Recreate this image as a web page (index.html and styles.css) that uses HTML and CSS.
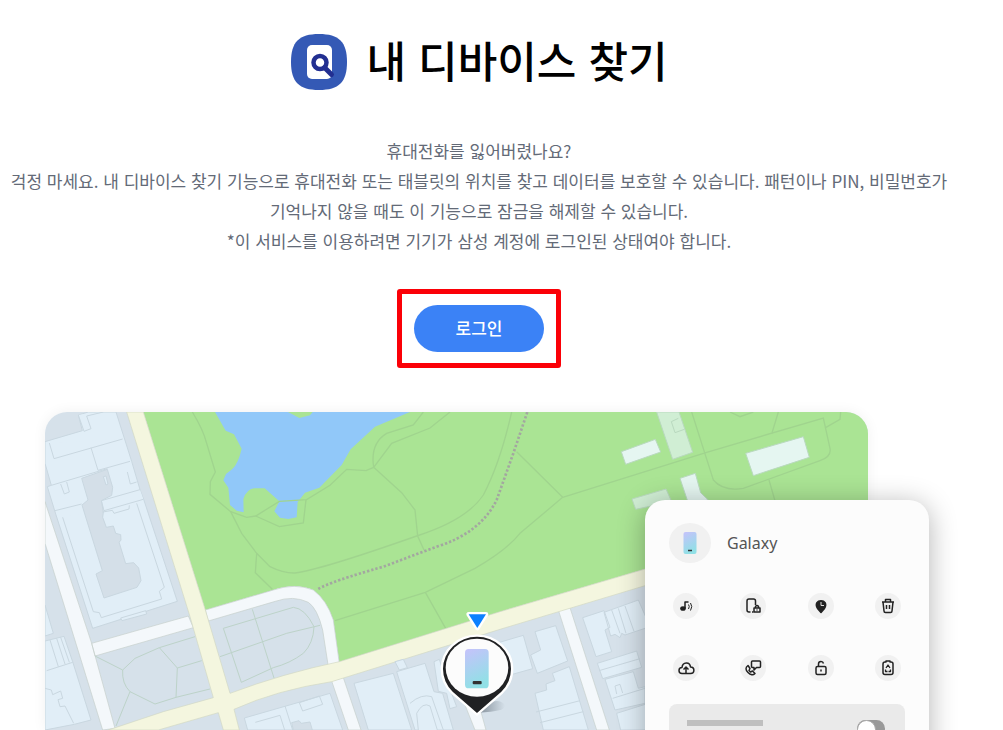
FILE: index.html
```html
<!DOCTYPE html>
<html lang="ko">
<head>
  <meta charset="UTF-8">
  <meta name="viewport" content="width=device-width, initial-scale=1.0">
  <title>내 디바이스 찾기</title>
  <link rel="stylesheet" href="styles.css">
</head>
<body>
  <main class="page">
    <header class="title">
      <svg class="logo" viewBox="0 0 56 56" aria-hidden="true">
        <path d="M28 0C48 0 56 8 56 28S48 56 28 56 0 48 0 28 8 0 28 0z" fill="#3459b5"/>
        <rect x="16" y="11" width="25" height="34" rx="5" fill="#fff"/>
        <circle cx="29" cy="28.500" r="6.500" fill="#fff" stroke="#222f91" stroke-width="4.500"/>
        <path d="M34 34l6.500 6.500" stroke="#222f91" stroke-width="5" stroke-linecap="round"/>
      </svg>
      <h1>내 디바이스 찾기</h1>
    </header>

    <p class="intro">
      휴대전화를 잃어버렸나요?<br>
      걱정 마세요. 내 디바이스 찾기 기능으로 휴대전화 또는 태블릿의 위치를 찾고 데이터를 보호할 수 있습니다. 패턴이나 PIN, 비밀번호가 기억나지 않을 때도 이 기능으로 잠금을 해제할 수 있습니다.<br>
      *이 서비스를 이용하려면 기기가 삼성 계정에 로그인된 상태여야 합니다.
    </p>

    <div class="login-frame">
      <button class="login" type="button">로그인</button>
    </div>

    <section class="stage">
      <svg class="map" viewBox="45 36 2469 954" preserveAspectRatio="xMinYMin slice" aria-hidden="true">
        <defs>
          <linearGradient id="screen" x1="0" y1="0" x2="0.300" y2="1">
            <stop offset="0" stop-color="#c6c2fb"/>
            <stop offset="1" stop-color="#91e0e6"/>
          </linearGradient>
          <linearGradient id="pin-shadow">
            <stop offset="0" stop-color="#6e7a85" stop-opacity="0.800"/>
            <stop offset="1" stop-color="#6e7a85" stop-opacity="0"/>
          </linearGradient>
        </defs>
        <rect x="45" y="36" width="2469" height="954" fill="#d6e1ea"/>

        <!-- park and lake -->
        <path d="M340 36L526 630 730 570Q795 548 850 570 890 600 910 660L928 785 1410 635 1845 507 2514 320V36z" fill="#aae494"/>
        <path d="M555 36L587 92 612 103 635 146Q625 190 607 207L588 222 580 241 595 263 600 315 620 332 641 337 640 297Q650 268 672 265H704L748 304 733 334 750 353 775 357 800 352 803 306 825 278 868 263 935 195 962 148 1035 80 1140 36z" fill="#91c8f9"/>
        <path d="M774 36L808 54 840 46 848 36z" fill="#aae494"/>

        <!-- park paths -->
        <g class="trail">
          <path d="M487 36Q520 90 530 130L556 216 541 245 540 283 602 335 650 352 677 348 748 304 830 299 900 256 950 208 1008 212 1031 202"/>
          <path d="M677 348L748 380 820 369 828 299M602 335L635 400 680 460 720 500Q760 520 795 519 870 510 1160 408 1310 360 1360 285 1410 190 1445 36"/>
          <path d="M680 460L676 518 727 568M1031 202Q1020 130 1070 100L1150 75 1180 36M1031 202L1085 130 1200 84 1260 36M1031 202L1115 278 1155 330 1163 408 1182 450"/>
          <path d="M915 662L1186 577 1335 505Q1430 450 1470 400L1598 292 1460 155M1186 577L1247 685M1598 292L2030 157 2380 54 2400 145Q2405 170 2370 182L2140 265Q2080 275 2050 240L1985 36M2225 102L2245 36M2388 82L2430 58 2432 36M2217 240L2240 320M2100 36L2130 50 2170 36"/>
        </g>
        <path d="M865 567Q900 545 1060 500L1220 440Q1350 400 1400 300L1450 160 1492 36" class="dotted"/>

        <!-- streets -->
        <g stroke="#c5ceca" stroke-width="2">
          <path d="M45 305L185 730 255 985 218 990 45 430zM185 730L475 648 490 683 195 768z" fill="#f4f8fb"/>
          <path d="M526 630L730 570Q795 548 850 570 890 600 910 660L928 790 895 800 878 690Q862 625 835 607 790 585 736 604L535 663z" fill="#f4f8fb"/>
          <path d="M905 843L940 833 993 990 955 990zM1305 915L1350 925 1368 990 1335 990zM1585 630L1620 623 1738 990 1700 990z" fill="#f4f8fb"/>
        </g>
        <path d="M290 36H340L526 630 600 880Q760 820 928 785L1410 635 1845 507 2000 462V510L1845 557 1410 688 905 845Q740 870 612 928L628 990H580L565 938 385 990H235L400 935 550 893 480 650z" fill="#f4f6df" stroke="#d2d8c2" stroke-width="2"/>

        <!-- buildings, north-west block -->
        <g class="building">
          <path d="M45 125L157 92 145 45 175 36H258L305 184 330 269 341 298 442 604 188 685 78 345 52 260 64 256 45 190z"/>
          <path d="M145 45L162 94 183 86 170 48 220 36M58 129L72 176 278 117M183 143L204 211 300 184M64 256L232 206M92 252L103 282 118 276 110 246M330 269L214 302 222 332 340 298M75 332L155 312M98 352L190 635 208 638 214 653 395 597 388 574 403 562 320 310M292 216L301 252 320 246M272 654L347 632 350 642 276 662z"/>
          <path d="M155 235L232 208 248 262 245 286 214 302 220 336 218 352 229 382 250 378 257 400 272 404 273 421 267 426 287 491 311 488 326 504 333 542 321 562 222 594 198 522 217 512 156 315 174 300z" class="yard"/>
          <path d="M218 336L247 331 252 340 297 327 298 316M220 230L228 255 234 252 228 228z"/>
          <path d="M45 615L70 700 45 708zM45 723L102 709 128 785 183 960 133 973 45 990zM50 812L128 787M60 720L85 800M80 715L105 792M92 712L118 787"/>
          <path d="M45 865L64 870 68 884 92 873 98 895 84 899 90 920 105 918 131 970"/>
        </g>

        <!-- squares -->
        <g class="lawn">
          <path d="M195 768L278 810 315 775 388 743 495 710M278 810Q275 850 300 875L375 912 438 892 540 867M388 743L442 804 438 892M442 804L515 782M300 875L258 978"/>
          <path d="M580 685L790 622Q825 625 852 680 850 730 820 760 780 790 730 803L634 847zM667 628L732 834M570 770L770 700 870 676"/>
        </g>

        <!-- buildings south of the avenue -->
        <g class="building">
          <path d="M643 954L900 880 938 990H653zM765 918L788 990M676 967L750 946 764 990M808 908L868 888 878 913 818 933z"/>
          <path d="M785 968L807 962 814 970 840 966 847 990H790z" class="yard"/>
          <path d="M972 850L1090 820 1145 990H1015zM1095 785L1120 778 1132 803 1108 810zM1100 815L1185 790 1212 875 1238 880 1270 990H1155L1100 815"/>
          <path d="M1140 910Q1175 880 1205 890L1240 990M1165 990L1160 940Q1178 905 1200 918L1222 990M1212 785L1228 778 1240 815 1280 920 1260 926 1250 880 1225 874z"/>
          <path d="M1405 728L1480 706 1508 806 1440 825zM1515 695L1577 677 1613 783 1522 820 1502 765 1532 750zM1567 820L1618 800 1675 990H1540L1515 880 1550 870 1548 852 1575 842zM1518 936L1650 902M1530 968L1660 935"/>
          <path d="M1658 653L1722 632 1740 682 1725 690 1745 755 1698 770zM1722 637L1825 600 1860 680 1785 705 1775 700 1770 713 1755 703 1742 708zM1745 630L1770 700M1765 625L1788 700M1785 618L1812 694M1702 790L1820 753 1835 802 1718 836zM1707 812L1830 776M1725 838L1810 815 1825 865 1845 860V910L1755 930zM1748 895L1845 865M1760 940L1855 910V990H1772zM1760 882L1755 858 1770 853 1778 879"/>
        </g>
        <g class="pavilion">
          <path d="M1774 155L1876 118 1892 156 1787 193zM2147 160L2320 110 2338 172 2170 227zM1950 235L1996 220 2012 278 2035 300 1975 310z" fill="#e5f6f1"/>
          <path d="M1880 36H1947L1988 157 1928 178zM1806 297L1908 267 1925 305 1817 328z" fill="#d0eed4"/>
          <path d="M1945 55L1924 65 1935 98 1963 88" fill="none"/>
        </g>

        <!-- device pin -->
        <path d="M1345 932Q1400 885 1425 915 1430 935 1345 938z" fill="url(#pin-shadow)"/>
        <path d="M1341 939L1268 875A102 97 0 1 1 1414 875z" fill="#202123" stroke="#fff" stroke-width="14" paint-order="stroke"/>
        <ellipse cx="1341" cy="803" rx="94" ry="87" fill="#fcfcfc"/>
        <rect x="1305" y="747" width="71" height="118" rx="11" fill="url(#screen)"/>
        <rect x="1328" y="843" width="27" height="10" rx="3" fill="#333"/>
        <path d="M1316 643H1368L1342 684z" fill="#0b80ff" stroke="#fff" stroke-width="14" stroke-linejoin="round" paint-order="stroke"/>
      </svg>

      <aside class="card">
        <div class="device">
          <svg class="device-icon" viewBox="0 0 42 40" aria-hidden="true">
            <ellipse cx="21" cy="20" rx="21" ry="20" fill="#f1f1f1"/>
            <rect x="14.500" y="9" width="13" height="22" rx="2" fill="url(#screen)"/>
            <path d="M19 27.500h4" stroke="#333" stroke-width="1.500"/>
          </svg>
          <span>Galaxy</span>
        </div>

        <div class="actions">
          <button type="button" aria-label="소리 울리기">
            <svg viewBox="0 0 26 26"><ellipse cx="10" cy="15.500" rx="2.800" ry="2.300" fill="#222" stroke="none"/><path d="M12 15.500V9h3.500"/><path d="M15.500 11.500q1.500 2 0 4.500M17.500 10q2.500 3.500 0 7.500" stroke-width="1"/></svg>
          </button>
          <button type="button" aria-label="잠금">
            <svg viewBox="0 0 26 26"><path d="M15.500 12V8q0-2-2-2H9Q7 6 7 8v9q0 2 2 2h1.500M12 19h1.500"/><path d="M14 15h6v4h-6zM15.500 15v-1.500q1.500-2 3 0V15"/><path d="M17 16.500v1"/></svg>
          </button>
          <button type="button" aria-label="위치 추적">
            <svg viewBox="0 0 26 26"><path d="M13 19.500l-3.500-4C3.500 5 22.500 5 16.500 15.500z" fill="#222"/><path d="M13 9v3.500h3" stroke="#ddd" stroke-width="1"/></svg>
          </button>
          <button type="button" aria-label="데이터 삭제">
            <svg viewBox="0 0 26 26"><path d="M7 9h12M10.500 9V6.500h5V9M8 9l1 9q0 1.500 1.500 1.500h5q1.500 0 1.500-1.500l1-9"/><path d="M11.500 12v4M14.500 12v4"/></svg>
          </button>
          <button type="button" aria-label="백업">
            <svg viewBox="0 0 26 26"><path d="M9 18.500c-4 0-4-6 0-6 .5-6 8-6 8.500-.5 4.500 0 4.500 6.500 0 6.500zM13 18.500v-6M10.500 14.500l2.500-2.500 2.500 2.500"/></svg>
          </button>
          <button type="button" aria-label="전화 및 메시지">
            <svg viewBox="0 0 26 26"><path d="M12.500 6h7q1 0 1 1v4.500q0 1-1 1h-3L14 15v-2.500h-1.500q-1 0-1-1V7q0-1 1-1zM8 10.500q-4 3 0 7t7 1l-2.500-2.500-2 1-1.500-1.500 1-2z"/></svg>
          </button>
          <button type="button" aria-label="잠금 해제">
            <svg viewBox="0 0 26 26"><rect x="8" y="11.500" width="10" height="8" rx="1.500"/><path d="M10.500 11.500V9q0-2.500 2.500-2.500 2 0 2.500 2M13 14.500v2"/></svg>
          </button>
          <button type="button" aria-label="배터리 시간 늘리기">
            <svg viewBox="0 0 26 26"><path d="M11 7V6h4v1h1q2 0 2 2v8.500q0 2-2 2h-6q-2 0-2-2V9q0-2 2-2z"/><path d="M11 13l2-3 2 3M10.500 14.500v2h2M15.500 14.500v2h-2" stroke-width="1.300"/></svg>
          </button>
        </div>

        <div class="setting">
          <span class="bar"></span>
          <input class="toggle" type="checkbox" aria-label="오프라인 찾기">
        </div>
      </aside>
    </section>
  </main>
</body>
</html>
```
FILE: styles.css
```css
* {
  margin: 0;
  padding: 0;
  box-sizing: border-box;
}

body {
  font-family: "Noto Sans CJK KR", sans-serif;
  background: #fff;
  color: #000;
}

.page {
  margin-right: 45px;
  padding-top: 32px;
  display: flex;
  flex-direction: column;
  align-items: center;
}

.title {
  display: flex;
  align-items: center;
  gap: 20px;
}

.logo {
  width: 56px;
  height: 56px;
}

h1 {
  padding-bottom: 6px;
  font-size: 43px;
  font-weight: 500;
  line-height: 54px;
}

.intro {
  margin-top: 44px;
  padding: 0 10px;
  font-size: 17px;
  line-height: 30px;
  color: #636a77;
  text-align: center;
  word-break: keep-all;
}

.login-frame {
  margin-top: 33px;
  padding: 11px 12px;
  border: 5px solid #fb0007;
  border-radius: 3px;
}

.login {
  display: block;
  padding: 0 42px 2px;
  border: none;
  border-radius: 24px;
  background: #3b82f6;
  color: #fff;
  font-family: inherit;
  font-size: 17px;
  font-weight: 500;
  line-height: 45px;
  cursor: pointer;
}

.stage {
  position: relative;
  width: 100%;
  height: 362px;
  padding: 44px 90px 0 45px;
  overflow: hidden;
}

.map {
  display: block;
  width: 100%;
  height: 318px;
  border-radius: 22px 22px 0 0;
  box-shadow: 0 0 14px rgba(0, 0, 0, 0.06);
}

.trail {
  fill: none;
  stroke: #a0d48e;
  stroke-width: 4;
}

.dotted {
  fill: none;
  stroke: #a3a7a0;
  stroke-width: 8;
  stroke-dasharray: 7 6;
}

.building {
  fill: #e1eef7;
  stroke: #c9d7e0;
  stroke-width: 3;
}

.yard {
  fill: #d4dfe8;
}

.pavilion {
  stroke: #b9d9bf;
  stroke-width: 3;
}

.lawn {
  fill: none;
  stroke: #bdd3c9;
  stroke-width: 3;
}

/* floating device panel */
.card {
  position: absolute;
  top: 132px;
  right: 29px;
  width: 284px;
  padding: 23px 24px 0;
  border-radius: 20px 20px 0 0;
  background: #fcfcfc;
  box-shadow: 0 4px 28px rgba(0, 0, 0, 0.3);
}

.device {
  display: flex;
  align-items: center;
  gap: 16px;
  font-family: "Noto Sans", sans-serif;
  font-size: 16px;
  color: #555;
}

.device-icon {
  width: 42px;
  height: 40px;
}

.actions {
  display: grid;
  grid-template-columns: repeat(4, 26px);
  justify-content: space-between;
  row-gap: 36px;
  padding: 30px 4px 0;
}

.actions button {
  width: 26px;
  height: 26px;
  border: none;
  border-radius: 50%;
  background: #f1f1f1;
  cursor: pointer;
}

.actions svg {
  display: block;
  fill: none;
  stroke: #222;
  stroke-width: 1.5;
  stroke-linejoin: round;
}

.setting {
  display: flex;
  align-items: flex-start;
  justify-content: space-between;
  height: 60px;
  margin-top: 23px;
  padding: 16px 20px 0 18px;
  border-radius: 8px;
  background: #eaeaea;
}

.bar {
  width: 76px;
  height: 6px;
  background: #bfbfbf;
}

.toggle {
  appearance: none;
  width: 28px;
  height: 17px;
  border-radius: 9px;
  background: #999;
}

.toggle::before {
  content: "";
  display: block;
  width: 17px;
  height: 17px;
  border: 1px solid #aaa;
  border-radius: 50%;
  background: #fff;
}
```
